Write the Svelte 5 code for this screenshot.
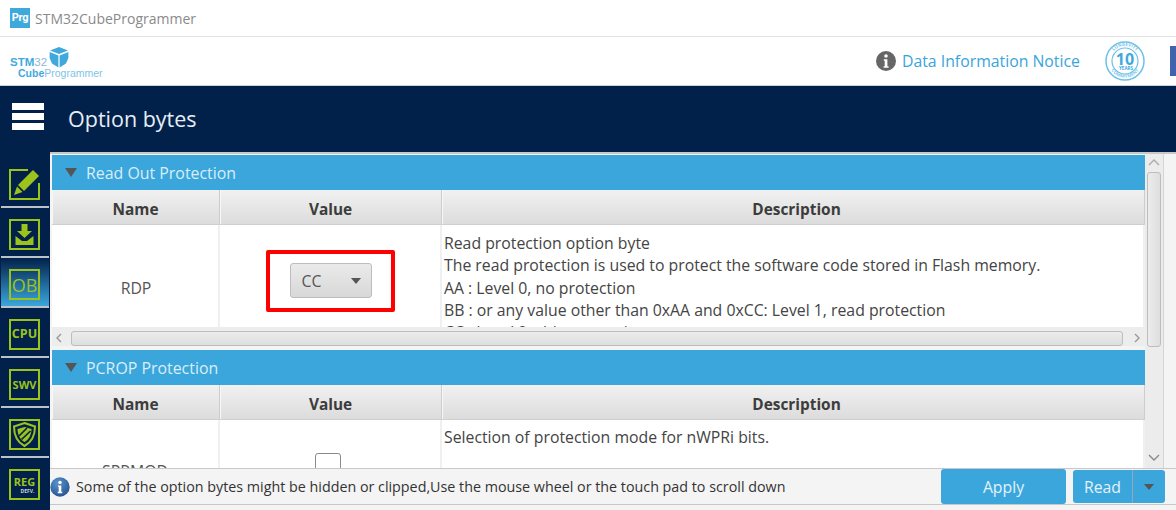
<script>
    let tools = [
        {id: 'edit'},
        {id: 'download'},
        {id: 'ob', label: 'OB', active: true},
        {id: 'cpu', label: 'CPU'},
        {id: 'swv', label: 'SWV'},
        {id: 'shield'},
        {id: 'reg', label: 'REG'}
    ];
</script>

<div class="window">
    <div class="titlebar">
        <span class="app-icon">Prg</span>
        <span class="app-title">STM32CubeProgrammer</span>
    </div>

    <div class="brandbar">
        <div class="logo">
            <div class="logo-top">
                <span class="logo-stm">STM<i>32</i></span>
                <svg width="20" height="21" viewBox="0 0 20 21">
                    <path d="M10 0 19 3.5 10 7 1 3.5Z" fill="#3fa9dc"/>
                    <path d="M0.6 5 9.4 8.4V20.5L3 16.5 0.6 11Z" fill="#3fa9dc"/>
                    <path d="M19.4 5 10.6 8.4V20.5L17 16.5 19.4 11Z" fill="#3fa9dc"/>
                </svg>
            </div>
            <div class="logo-bottom"><b>Cube</b>Programmer</div>
        </div>
        <div class="notice">
            <svg width="20" height="20" viewBox="0 0 20 20">
                <circle cx="10" cy="10" r="10" fill="#666"/>
                <circle cx="10" cy="5" r="1.8" fill="#fff"/>
                <path d="M7.8 8.2h3.6v7h1.2v1.5H7.6v-1.5h1.1V9.7h-.9z" fill="#fff"/>
            </svg>
            <span>Data Information Notice</span>
        </div>
        <div class="seal">
            <svg width="40" height="40" viewBox="0 0 40 40">
                <defs>
                    <path id="sealtop" d="M5 20a15 15 0 0 1 30 0"/>
                    <path id="sealbottom" d="M3.4 20a16.6 16.6 0 0 0 33.2 0"/>
                </defs>
                <circle cx="20" cy="20" r="19" fill="none" stroke="#6cc0e8" stroke-width="1.5"/>
                <circle cx="20" cy="20" r="13" fill="none" stroke="#6cc0e8" stroke-width="1.2"/>
                <text class="seal-ring"><textPath href="#sealtop" startOffset="50%" text-anchor="middle">LONGEVITY</textPath></text>
                <text class="seal-ring"><textPath href="#sealbottom" startOffset="50%" text-anchor="middle">COMMITMENT</textPath></text>
                <text x="20" y="24" text-anchor="middle" class="seal-ten">10</text>
                <text x="21" y="29" text-anchor="middle" class="seal-years">YEARS</text>
            </svg>
        </div>
        <div class="brand-edge"></div>
    </div>

    <div class="main">
        <aside class="sidebar">
            <div class="burger"><span></span><span></span><span></span></div>
            {#each tools as tool}
                <div class="tool" class:active={tool.active}>
                    <div class="tool-box {tool.id}">
                        {#if tool.id === 'edit'}
                            <svg width="31" height="31" viewBox="0 0 31 31">
                                <path d="M19 1H1V30H30V14" fill="none" stroke="#9bc31c" stroke-width="2"/>
                                <path d="M24 1 30 7 15 22 9 16Z" fill="#9bc31c"/>
                                <path d="M8 17.5 13.5 23 5 26Z" fill="#9bc31c"/>
                            </svg>
                        {:else if tool.id === 'download'}
                            <svg width="27" height="27" viewBox="0 0 27 27">
                                <path d="M10.5 3H16.5V10H21L13.5 17 6 10H10.5Z" fill="#9bc31c"/>
                                <path d="M4.5 15 11 20H16L22.5 15V24H4.5Z" fill="#9bc31c"/>
                            </svg>
                        {:else if tool.id === 'shield'}
                            <svg width="27" height="27" viewBox="0 0 27 27">
                                <path d="M13.5 2 24 5.5C24 14 21 21 13.5 25 6 21 3 14 3 5.5Z" fill="none" stroke="#9bc31c" stroke-width="2"/>
                                <path d="M13.5 6 20.5 8C20.5 13.5 18 18.5 13.5 21 9 18.5 6.5 13.5 6.5 8Z" fill="#9bc31c"/>
                                <path d="M8 15 16 7M10.5 18.5 19.5 10" stroke="#02214a" stroke-width="1.7"/>
                            </svg>
                        {:else if tool.id === 'reg'}
                            <span class="reg-label">REG</span>
                            <span class="reg-sub">DEFV.</span>
                        {:else}
                            <span>{tool.label}</span>
                        {/if}
                    </div>
                </div>
            {/each}
        </aside>

        <div class="content">
            <div class="pagehead">Option bytes</div>
            <div class="workspace">
                <div class="body-row">
                    <div class="panels">
                        <section class="panel first">
                            <div class="panel-title"><i class="tri"></i>Read Out Protection</div>
                            <div class="grid head">
                                <div>Name</div>
                                <div>Value</div>
                                <div class="head-desc">Description</div>
                            </div>
                            <div class="grid row rdp">
                                <div class="cell-name">RDP</div>
                                <div class="cell-value">
                                    <div class="redbox">
                                        <div class="combo"><span>CC</span><i class="tri small"></i></div>
                                    </div>
                                </div>
                                <div class="cell-desc">
                                    <p>Read protection option byte</p>
                                    <p>The read protection is used to protect the software code stored in Flash memory.</p>
                                    <p>AA : Level 0, no protection</p>
                                    <p>BB : or any value other than 0xAA and 0xCC: Level 1, read protection</p>
                                    <p class="clipped">CC : Level 2, chip protection</p>
                                </div>
                            </div>
                            <div class="hscroll">
                                <svg width="10" height="12" viewBox="0 0 10 12"><path d="M7 2 3 6 7 10" fill="none" stroke="#999" stroke-width="1.4"/></svg>
                                <div class="hthumb"></div>
                                <svg width="10" height="12" viewBox="0 0 10 12"><path d="M3 2 7 6 3 10" fill="none" stroke="#999" stroke-width="1.4"/></svg>
                            </div>
                        </section>

                        <section class="panel second">
                            <div class="panel-title"><i class="tri"></i>PCROP Protection</div>
                            <div class="grid head">
                                <div>Name</div>
                                <div>Value</div>
                                <div class="head-desc">Description</div>
                            </div>
                            <div class="grid row sprmod">
                                <div class="cell-name">SPRMOD</div>
                                <div class="cell-value"><div class="checkbox"></div></div>
                                <div class="cell-desc"><p>Selection of protection mode for nWPRi bits.</p></div>
                            </div>
                        </section>
                    </div>

                    <div class="vscroll">
                        <svg width="14" height="9" viewBox="0 0 14 9"><path d="M2 7 7 2 12 7" fill="none" stroke="#aaa" stroke-width="1.4"/></svg>
                        <div class="vthumb"></div>
                        <svg width="14" height="9" viewBox="0 0 14 9"><path d="M2 2 7 7 12 2" fill="none" stroke="#888" stroke-width="1.4"/></svg>
                    </div>
                </div>

                <div class="statusbar">
                    <svg width="20" height="20" viewBox="0 0 20 20">
                        <defs>
                            <radialGradient id="infoball" cx="0.4" cy="0.3" r="0.8">
                                <stop offset="0" stop-color="#5d93c9"/>
                                <stop offset="1" stop-color="#1d4f8f"/>
                            </radialGradient>
                        </defs>
                        <circle cx="10" cy="10" r="9.7" fill="url(#infoball)"/>
                        <circle cx="10" cy="5.4" r="1.7" fill="#fff"/>
                        <path d="M8 8.4h3.3v6.4h1v1.4H7.7v-1.4h1V9.8H8z" fill="#fff"/>
                    </svg>
                    <span class="status-text">Some of the option bytes might be hidden or clipped,Use the mouse wheel or the touch pad to scroll down</span>
                    <button class="btn apply">Apply</button>
                    <div class="split">
                        <button class="btn read">Read</button>
                        <button class="btn caret"><i class="tri small"></i></button>
                    </div>
                </div>
            </div>
        </div>
    </div>
</div>

<style>
:global(body){
    margin: 0;
    overflow: hidden;
    background: #fff;
}

.window{
    width: 1176px;
    height: 510px;
    display: flex;
    flex-direction: column;
    overflow: hidden;
    font-family: "Open Sans", "Noto Sans", sans-serif;
    font-size: 15.8px;
    color: #444;
}

.titlebar{
    height: 36px;
    box-sizing: content-box;
    display: flex;
    align-items: center;
    padding-left: 10px;
    border-bottom: 1px solid #e2e2e2;
    flex: none;
}

.app-icon{
    width: 20px;
    height: 20px;
    background: #3fa9dc;
    color: #fff;
    font-size: 11px;
    font-weight: 700;
    line-height: 20px;
    text-align: center;
    font-family: "Roboto", sans-serif;
    letter-spacing: -0.2px;
}

.app-title{
    margin-left: 5px;
    font-size: 14px;
    color: #8a8a8a;
}

.brandbar{
    height: 49px;
    flex: none;
    display: flex;
    align-items: center;
    padding-left: 10px;
    border-bottom: 1px solid #c9d2dc;
    box-sizing: border-box;
}

.logo{
    width: 104px;
    margin-top: 2px;
    color: #3fa9dc;
    font-family: "Liberation Sans", sans-serif;
}

.logo-top{
    display: flex;
    align-items: flex-end;
    height: 21px;
}

.logo-top svg{
    margin-left: 2px;
}

.logo-stm{
    font-size: 11.5px;
    font-weight: 700;
    line-height: 11px;
}

.logo-stm i{
    font-style: normal;
    font-weight: 400;
    color: #8fb8cf;
}

.logo-bottom{
    font-size: 10.5px;
    line-height: 10px;
    padding-left: 8px;
    color: #7fc3e6;
    white-space: nowrap;
}

.logo-bottom b{
    color: #3fa9dc;
}

.notice{
    margin-left: 762px;
    display: flex;
    align-items: center;
    gap: 6px;
    font-size: 15.8px;
    color: #39a5da;
    white-space: nowrap;
}

.seal{
    margin-left: 25px;
    height: 40px;
}

.seal-ten{
    font-family: "Open Sans", sans-serif;
    font-size: 16px;
    font-weight: 700;
    fill: #3fa9dc;
}

.seal-years{
    font-family: "Open Sans", sans-serif;
    font-size: 4.5px;
    font-weight: 700;
    fill: #3fa9dc;
}

.seal-ring{
    font-family: "Open Sans", sans-serif;
    font-size: 4.5px;
    font-weight: 700;
    fill: #7cc7ea;
}

.brand-edge{
    width: 6px;
    height: 30px;
    margin-left: 25px;
    background: #3f63ad;
}

.main{
    flex: 1;
    display: flex;
    min-height: 0;
    background: #02214a;
}

.sidebar{
    width: 50px;
    flex: none;
    display: flex;
    flex-direction: column;
    align-items: center;
}

.burger{
    height: 72px;
    flex: none;
    width: 50px;
    box-sizing: border-box;
    padding: 17px 0 0 12px;
}

.burger span{
    display: block;
    width: 32px;
    height: 7px;
    margin-bottom: 3px;
    background: #fff;
}

.tool{
    width: 48px;
    height: 50px;
    flex: none;
    box-sizing: border-box;
    padding: 11px 0 0 8px;
    border-bottom: 2px solid #bcc2ca;
    display: flex;
}

.tool:last-child{
    border-bottom: none;
}

.tool.active{
    background: linear-gradient(#02214a, #3ba6dc);
}

.tool-box{
    width: 31px;
    height: 31px;
    box-sizing: border-box;
    border: 2px solid #9bc31c;
    color: #9bc31c;
    display: flex;
    flex-direction: column;
    align-items: center;
    justify-content: center;
    font-size: 12px;
    font-weight: 700;
    line-height: 1;
}

.tool-box.edit{
    border: none;
}

.tool-box.ob{
    font-size: 18px;
    font-weight: 400;
}

.tool-box.cpu{
    font-size: 12.5px;
}

.tool-box.swv{
    font-size: 11px;
}

.reg-label{
    font-size: 11px;
    margin-top: 1px;
}

.reg-sub{
    font-size: 5px;
    color: #cfd6dc;
    margin-top: 2px;
    margin-left: 6px;
}

.content{
    flex: 1;
    min-width: 0;
    display: flex;
    flex-direction: column;
}

.pagehead{
    height: 66px;
    flex: none;
    box-sizing: border-box;
    padding: 18px 0 0 18px;
    font-size: 21.5px;
    line-height: 30px;
    color: #e6eef5;
}

.workspace{
    flex: 1;
    min-height: 0;
    display: flex;
    flex-direction: column;
    background: #f4f4f4;
    border-top: 2px solid #c8c8c8;
}

.body-row{
    flex: 1;
    min-height: 0;
    display: flex;
    padding-left: 2px;
}

.panels{
    width: 1093px;
    overflow: hidden;
    padding-top: 1px;
    flex: none;
}

.panel-title{
    height: 35px;
    box-sizing: border-box;
    background: #3ba6dc;
    color: #d9eef9;
    font-size: 15.9px;
    display: flex;
    align-items: center;
    padding-left: 13px;
}

.tri{
    display: block;
    width: 0;
    height: 0;
    border-left: 6.5px solid transparent;
    border-right: 6.5px solid transparent;
    border-top: 9px solid #555;
    margin-right: 9px;
}

.tri.small{
    border-left-width: 5.5px;
    border-right-width: 5.5px;
    border-top-width: 6px;
    margin: 0;
}

.grid{
    display: grid;
    grid-template-columns: 168px 222px 1fr;
}

.head{
    height: 35px;
    background: linear-gradient(#f1f1f1, #dcdcdc);
    border-bottom: 1px solid #cfcfcf;
    box-sizing: border-box;
    font-weight: 700;
    color: #3c3c3c;
}

.head div{
    display: flex;
    align-items: center;
    justify-content: center;
    padding-top: 5px;
    border-right: 1px solid #cdcdcd;
    box-shadow: inset 1px 0 0 #f7f7f7;
    font-size: 15.4px;
}

.head .head-desc{
    padding-left: 7px;
}

.row{
    background: #fff;
    overflow: hidden;
}

.rdp{
    height: 102px;
}

.sprmod{
    height: 60px;
}

.row > div{
    border-right: 2px solid #f0f0f0;
}

.cell-name{
    display: flex;
    align-items: center;
    justify-content: center;
    color: #555;
}

.rdp .cell-name{
    padding: 7px 0 0 2px;
}

.rdp .cell-value{
    padding-bottom: 7px;
}

.cell-value{
    display: flex;
    align-items: center;
    justify-content: center;
}

.redbox{
    width: 129px;
    height: 62px;
    box-sizing: border-box;
    border: 4px solid #f00;
    border-radius: 2px;
    display: flex;
    align-items: center;
    justify-content: center;
}

.combo{
    width: 82px;
    height: 35px;
    margin-left: 1px;
    box-sizing: border-box;
    background: linear-gradient(#eaeaea, #d8d8d8);
    border: 1px solid #bdbdbd;
    border-radius: 3px;
    display: flex;
    align-items: center;
    justify-content: space-between;
    padding: 0 10px 0 11px;
    color: #555;
}

.cell-desc{
    padding: 7px 0 0 2px;
    line-height: 22.3px;
    color: #444;
    white-space: nowrap;
}

.cell-desc p{
    margin: 0;
}

.sprmod .cell-desc{
    padding-top: 6px;
}

.sprmod .cell-name{
    align-items: flex-start;
    padding-top: 40px;
    box-sizing: border-box;
}

.sprmod .cell-value{
    align-items: flex-start;
    padding: 33px 4px 0 0;
    box-sizing: border-box;
}

.checkbox{
    width: 26px;
    height: 26px;
    box-sizing: border-box;
    background: #fff;
    border: 1px solid #8a8a8a;
    border-radius: 3px;
}

.hscroll{
    height: 19px;
    background: #ededed;
    display: flex;
    align-items: center;
    padding: 3px 3px 0 2px;
    gap: 7px;
    margin-bottom: 4px;
    box-sizing: border-box;
}

.hthumb{
    flex: 1;
    height: 15px;
    margin-right: 2px;
    box-sizing: border-box;
    background: linear-gradient(#ececec, #dedede);
    border: 1px solid #bdbdbd;
    border-radius: 3px;
}

.vscroll{
    width: 19px;
    flex: none;
    background: #ececec;
    display: flex;
    flex-direction: column;
    align-items: center;
    padding: 4px 0 6px;
    box-sizing: border-box;
    border-right: 1px solid #d5d5d5;
}

.vthumb{
    width: 14px;
    height: 175px;
    margin-top: 5px;
    margin-bottom: auto;
    box-sizing: border-box;
    background: linear-gradient(90deg, #ececec, #dedede);
    border: 1px solid #bdbdbd;
    border-radius: 3px;
}

.statusbar{
    height: 35px;
    flex: none;
    display: flex;
    align-items: center;
    background: #f4f4f4;
    border-top: 1px solid #c8c8c8;
    border-bottom: 1px solid #c8c8c8;
    margin-bottom: 5px;
    box-sizing: content-box;
}

.status-text{
    margin-left: 6px;
    font-size: 14.3px;
    color: #333;
    white-space: nowrap;
    flex: 1;
}

.btn{
    border: none;
    background: #3ba6dc;
    color: #e3f2fa;
    font-family: inherit;
    font-size: 15.8px;
    padding: 0;
    border-radius: 3px;
}

.apply{
    width: 125px;
    height: 35px;
    margin-right: 7px;
}

.split{
    display: flex;
    margin-right: 11px;
    height: 33px;
}

.read{
    width: 59px;
    border-radius: 3px 0 0 3px;
    border-right: 1px solid #8fa9b8;
    box-sizing: content-box;
}

.caret{
    width: 32px;
    border-radius: 0 3px 3px 0;
    display: flex;
    align-items: center;
    justify-content: center;
}
</style>
